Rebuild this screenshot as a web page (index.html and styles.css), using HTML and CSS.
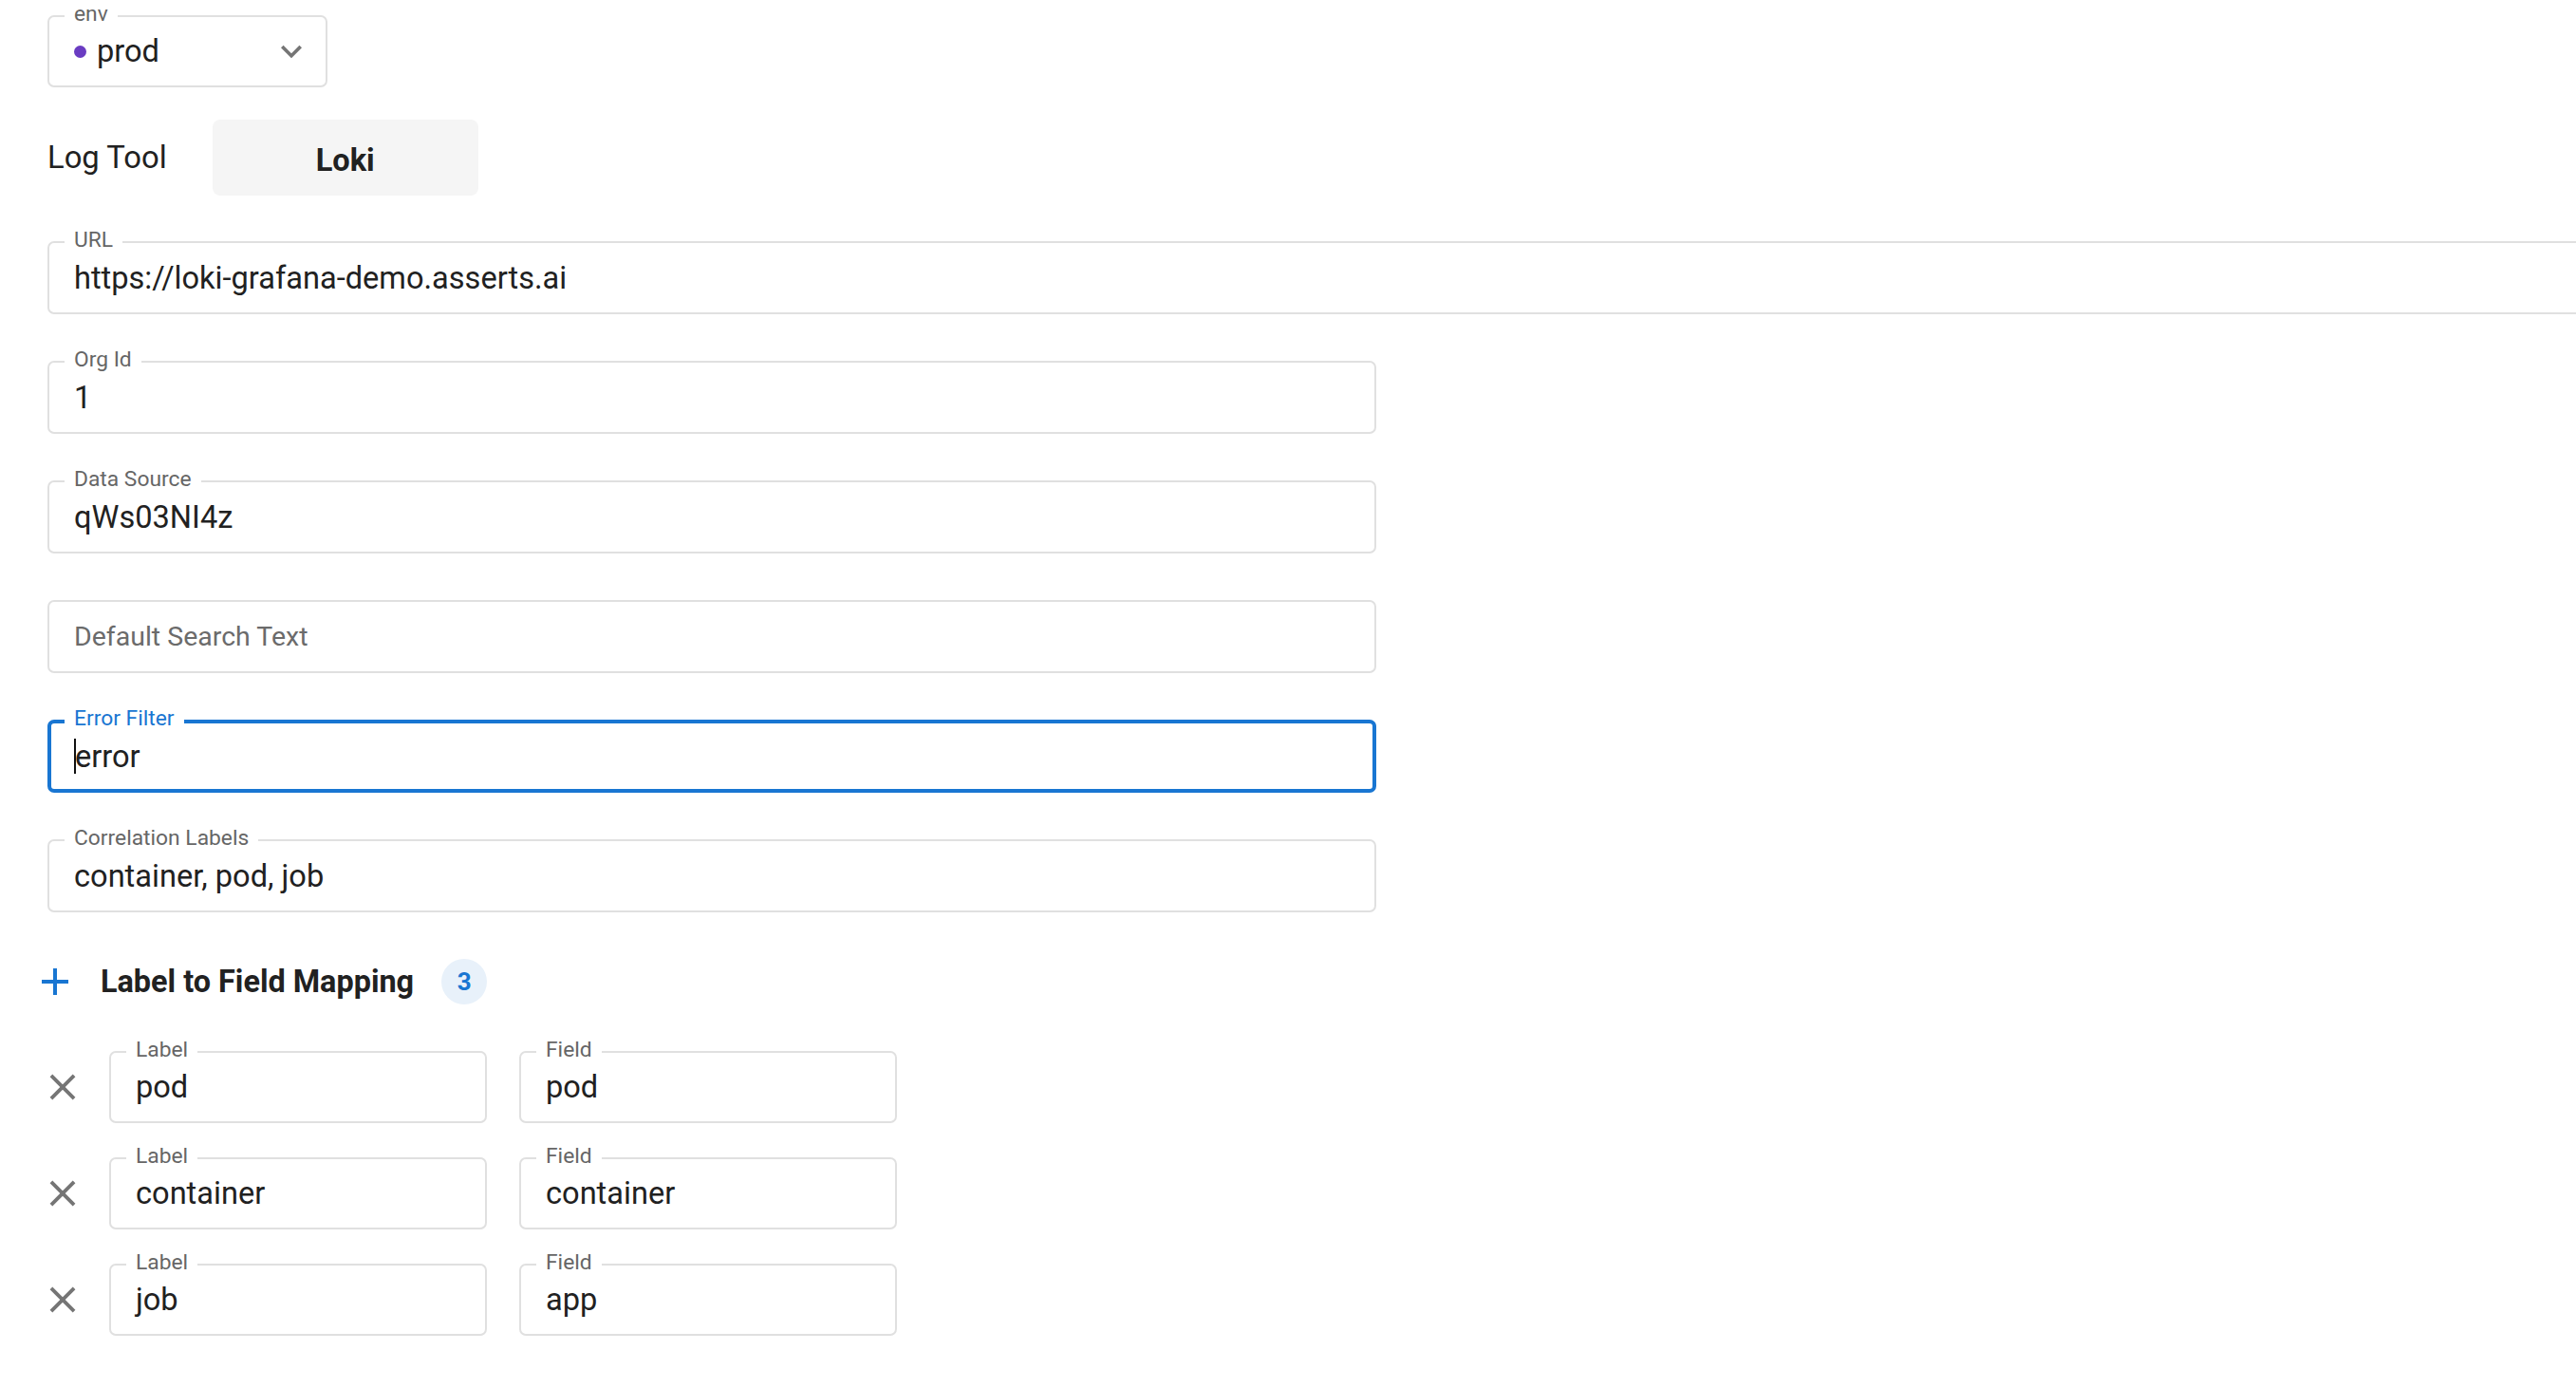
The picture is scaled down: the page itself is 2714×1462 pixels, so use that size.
FILE: index.html
```html
<!DOCTYPE html>
<html lang="en">
<head>
<meta charset="utf-8">
<title>Log Tool Settings</title>
<link rel="stylesheet" href="styles.css">
</head>
<body>
<div class="page">
  <div class="field select-field">
    <span class="field-label">env</span>
    <div class="select-value"><span class="dot"></span><span class="value">prod</span></div>
    <svg class="chevron" viewBox="0 0 24 24"><path d="M16.59 8.59 12 13.17 7.41 8.59 6 10l6 6 6-6z"/></svg>
  </div>

  <div class="tool-row">
    <span class="tool-label">Log Tool</span>
    <div class="tool-btn">Loki</div>
  </div>

  <div class="fields">
    <div class="field field-url"><span class="field-label">URL</span><span class="value">https://loki-grafana-demo.asserts.ai</span></div>
    <div class="field"><span class="field-label">Org Id</span><span class="value">1</span></div>
    <div class="field"><span class="field-label">Data Source</span><span class="value">qWs03NI4z</span></div>
    <div class="field"><span class="placeholder">Default Search Text</span></div>
    <div class="field field-focused"><span class="field-label">Error Filter</span><span class="value-wrap"><span class="caret"></span><span class="value">error</span></span></div>
    <div class="field"><span class="field-label">Correlation Labels</span><span class="value">container, pod, job</span></div>
  </div>

  <div class="mapping-header">
    <svg class="add-icon" viewBox="0 0 24 24"><path d="M19 13h-6v6h-2v-6H5v-2h6V5h2v6h6v2z"/></svg>
    <span class="mapping-title">Label to Field Mapping</span>
    <span class="badge">3</span>
  </div>

  <div class="mapping-rows">
    <div class="mapping-row">
      <svg class="remove-icon" viewBox="0 0 24 24"><path d="M19 6.41 17.59 5 12 10.59 6.41 5 5 6.41 10.59 12 5 17.59 6.41 19 12 13.41 17.59 19 19 17.59 13.41 12z"/></svg>
      <div class="field"><span class="field-label">Label</span><span class="value">pod</span></div>
      <div class="field"><span class="field-label">Field</span><span class="value">pod</span></div>
    </div>
    <div class="mapping-row">
      <svg class="remove-icon" viewBox="0 0 24 24"><path d="M19 6.41 17.59 5 12 10.59 6.41 5 5 6.41 10.59 12 5 17.59 6.41 19 12 13.41 17.59 19 19 17.59 13.41 12z"/></svg>
      <div class="field"><span class="field-label">Label</span><span class="value">container</span></div>
      <div class="field"><span class="field-label">Field</span><span class="value">container</span></div>
    </div>
    <div class="mapping-row">
      <svg class="remove-icon" viewBox="0 0 24 24"><path d="M19 6.41 17.59 5 12 10.59 6.41 5 5 6.41 10.59 12 5 17.59 6.41 19 12 13.41 17.59 19 19 17.59 13.41 12z"/></svg>
      <div class="field"><span class="field-label">Label</span><span class="value">job</span></div>
      <div class="field"><span class="field-label">Field</span><span class="value">app</span></div>
    </div>
  </div>
</div>
</body>
</html>
```

FILE: styles.css
```css
html, body {
  margin: 0;
  padding: 0;
  background: #ffffff;
  overflow: hidden;
}

body {
  font-family: Roboto, "Liberation Sans", Arial, sans-serif;
  color: #212121;
}

.page {
  padding: 16px 0 0 50px;
  display: flex;
  flex-direction: column;
  align-items: flex-start;
}

/* outlined field */
.field {
  position: relative;
  box-sizing: border-box;
  border: 2px solid #e0e0e0;
  border-radius: 7px;
  height: 77px;
  padding: 0 26px;
  display: flex;
  align-items: center;
  flex-shrink: 0;
}

.field-label {
  position: absolute;
  top: -16px;
  left: 16px;
  padding: 0 10px;
  background: #ffffff;
  font-size: 22.8px;
  line-height: 25px;
  color: #666666;
  white-space: nowrap;
}

.value {
  font-size: 32.6px;
  color: #212121;
  white-space: nowrap;
}

.placeholder {
  font-size: 28.5px;
  color: #6b6b6b;
  white-space: nowrap;
}

/* select */
.select-field {
  width: 295px;
  height: 76px;
  padding-right: 14px;
}

.select-value {
  flex: 1;
  display: flex;
  align-items: center;
  gap: 11px;
}

.dot {
  width: 13px;
  height: 13px;
  border-radius: 50%;
  background: #6a3cc2;
  flex-shrink: 0;
}

.chevron {
  width: 44px;
  height: 44px;
  fill: #757575;
  flex-shrink: 0;
}

/* log tool row */
.tool-row {
  margin-top: 34px;
  display: flex;
  align-items: center;
  gap: 48px;
}

.tool-label {
  font-size: 32.8px;
  color: #212121;
}

.tool-btn {
  box-sizing: border-box;
  width: 280px;
  height: 80px;
  padding-top: 6px;
  background: #f5f5f5;
  border-radius: 8px;
  display: flex;
  align-items: center;
  justify-content: center;
  font-size: 32.6px;
  font-weight: 700;
  color: #212121;
}

/* main fields */
.fields {
  margin-top: 48px;
  display: flex;
  flex-direction: column;
  align-items: flex-start;
  gap: 49px;
}

.fields .field {
  width: 1400px;
}

.fields .field-url {
  width: 2720px;
}

.fields .field-focused {
  border: 4px solid #1976d2;
  padding: 0 24px;
}

.field-focused .field-label {
  left: 14px;
  top: -18px;
  color: #1976d2;
}

.value-wrap {
  display: flex;
  align-items: center;
}

.caret {
  display: inline-block;
  width: 2px;
  height: 37px;
  background: #111111;
  margin-right: -1px;
}

/* mapping header */
.mapping-header {
  margin-top: 49px;
  margin-left: -16px;
  height: 48px;
  display: flex;
  align-items: center;
}

.add-icon {
  width: 48px;
  height: 48px;
  fill: #1976d2;
  flex-shrink: 0;
}

.mapping-title {
  margin-left: 24px;
  font-size: 32.4px;
  font-weight: 700;
  color: #212121;
}

.badge {
  margin-left: 29px;
  width: 48px;
  height: 48px;
  border-radius: 50%;
  background: #e8f1fa;
  color: #1976d2;
  font-size: 26px;
  font-weight: 700;
  display: flex;
  align-items: center;
  justify-content: center;
}

/* mapping rows */
.mapping-rows {
  margin-top: 49px;
  display: flex;
  flex-direction: column;
  gap: 36px;
}

.mapping-row {
  display: flex;
  align-items: center;
  gap: 34px;
}

.remove-icon {
  width: 46px;
  height: 46px;
  fill: #757575;
  margin-left: -7px;
  margin-right: -8px;
  flex-shrink: 0;
}

.mapping-row .field {
  width: 398px;
  height: 76px;
}
```
